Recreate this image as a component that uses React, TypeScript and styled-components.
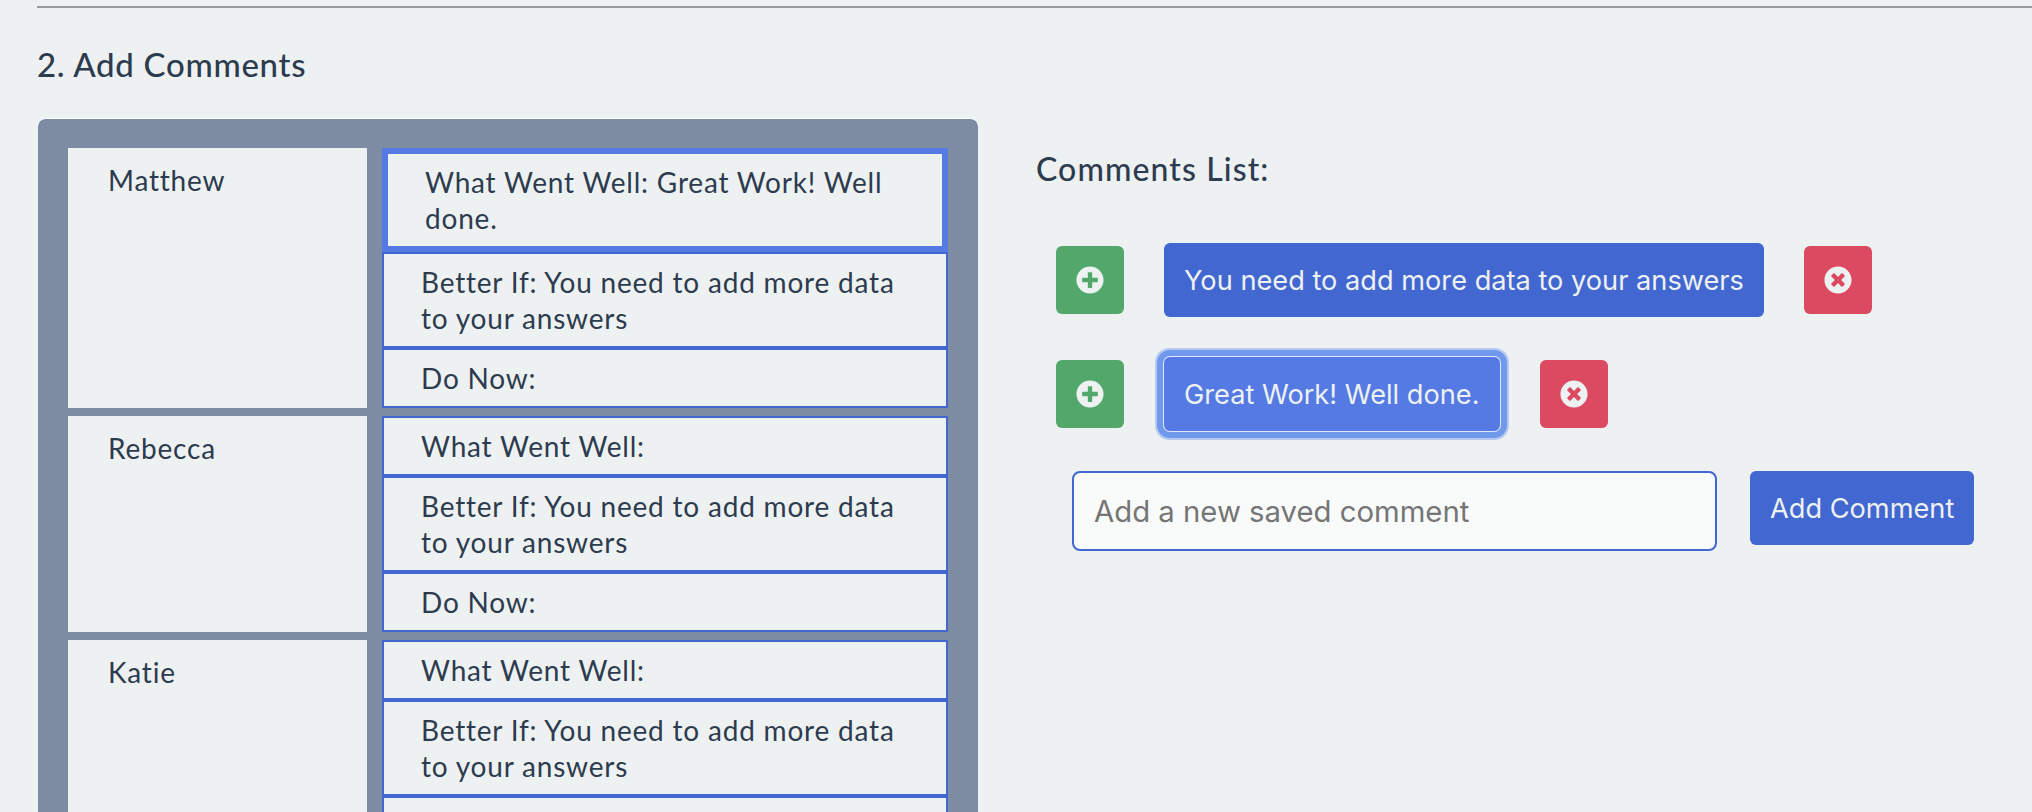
import styled, { createGlobalStyle } from 'styled-components'
import { FaPlusCircle, FaTimesCircle } from 'react-icons/fa'

const students = [
  { name: 'Matthew', well: 'Great Work! Well done.', selected: true },
  { name: 'Rebecca', well: '' },
  { name: 'Katie', well: '' },
]

const savedComments = [
  { text: 'You need to add more data to your answers' },
  { text: 'Great Work! Well done.', focused: true },
]

const App = () => (
  <Page>
    <GlobalStyle />
    <Rule />
    <SectionTitle>2. Add Comments</SectionTitle>
    <Columns>
      <StudentPanel>
        {students.map((student) => (
          <StudentRow key={student.name}>
            <NameCell>{student.name}</NameCell>
            <FeedbackStack>
              <FeedbackCell $selected={student.selected}>What Went Well:{student.well && ` ${student.well}`}</FeedbackCell>
              <FeedbackCell>Better If: You need to add more data to your answers</FeedbackCell>
              <FeedbackCell>Do Now:</FeedbackCell>
            </FeedbackStack>
          </StudentRow>
        ))}
      </StudentPanel>
      <CommentsColumn>
        <ListTitle>Comments List:</ListTitle>
        {savedComments.map((comment) => (
          <CommentRow key={comment.text}>
            <IconButton $color="#52a86b">
              <FaPlusCircle size={28} />
            </IconButton>
            <CommentButton $focused={comment.focused}>{comment.text}</CommentButton>
            <IconButton $color="#db4a60">
              <FaTimesCircle size={28} />
            </IconButton>
          </CommentRow>
        ))}
        <AddRow>
          <CommentInput placeholder="Add a new saved comment" />
          <AddButton>Add Comment</AddButton>
        </AddRow>
      </CommentsColumn>
    </Columns>
  </Page>
)

export default App

const GlobalStyle = createGlobalStyle`
  html, body {
    margin: 0;
    height: 812px;
    overflow: hidden;
    background: #edf1f2;
  }
`

const Page = styled.div`
  padding: 6px 0 0 37px;
  color: #2d3b4f;
  font-family: 'Lato', sans-serif;
`

const Rule = styled.hr`
  margin: 0;
  border: 0;
  border-top: 2px solid #999;
`

const SectionTitle = styled.h2`
  margin: 38px 0 36px;
  font-size: 33px;
  line-height: 36px;
  font-weight: 500;
  letter-spacing: 0.7px;
`

const Columns = styled.div`
  display: flex;
  align-items: flex-start;
  gap: 58px;
  margin-left: 1px;
`

const StudentPanel = styled.div`
  box-sizing: border-box;
  width: 940px;
  padding: 29px 30px 30px;
  display: flex;
  flex-direction: column;
  gap: 8px;
  flex-shrink: 0;
  background: #7d8ca3;
  border-top: 1px solid #fff;
  border-radius: 8px;
`

const StudentRow = styled.div`
  display: flex;
  gap: 15px;
`

const NameCell = styled.div`
  width: 299px;
  box-sizing: border-box;
  padding: 14px 40px;
  background: #edf1f2;
  font-size: 28px;
  line-height: 36px;
  letter-spacing: 0.8px;
`

const FeedbackStack = styled.div`
  width: 566px;
  display: flex;
  flex-direction: column;
`

const FeedbackCell = styled.div<{ $selected?: boolean }>`
  padding: 10px 37px;
  border: ${(p) => (p.$selected ? '6px solid #557ae3' : '2px solid #4267d0')};
  background: #edf1f2;
  font-size: 28px;
  line-height: 36px;
  letter-spacing: 0.8px;
`

const CommentsColumn = styled.div`
  display: flex;
  flex-direction: column;
  align-items: flex-start;
`

const ListTitle = styled.h3`
  margin: 33px 0 56px;
  font-size: 32px;
  line-height: 36px;
  font-weight: 500;
  letter-spacing: 1.1px;
`

const CommentRow = styled.div`
  display: flex;
  align-items: center;
  gap: 40px;
  margin: 0 0 40px 20px;
`

const IconButton = styled.button<{ $color: string }>`
  width: 68px;
  height: 68px;
  display: flex;
  align-items: center;
  justify-content: center;
  padding: 0;
  border: 0;
  border-radius: 6px;
  background: ${(p) => p.$color};
  color: #edf1f2;
`

const CommentButton = styled.button<{ $focused?: boolean }>`
  height: 74px;
  padding: 0 20px;
  border: 0;
  border-radius: 6px;
  background: ${(p) => (p.$focused ? '#557ae3' : '#4267d0')};
  color: #edf1f2;
  font-family: 'Inter', sans-serif;
  font-size: 27.2px;
  white-space: nowrap;
  box-shadow: ${(p) => (p.$focused ? '0 0 0 1px #dfe7f8, 0 0 0 7px #7099ee, 0 0 0 9px #b5c9f2' : 'none')};
`

const AddRow = styled.div`
  display: flex;
  align-items: flex-start;
  gap: 33px;
  margin-left: 36px;
`

const CommentInput = styled.input`
  box-sizing: border-box;
  width: 645px;
  height: 80px;
  padding: 0 20px;
  border: 2px solid #4267d0;
  border-radius: 8px;
  background: #f9fbfa;
  font-family: 'Inter', sans-serif;
  font-size: 29.3px;

  &::placeholder {
    color: #757575;
    opacity: 1;
  }
`

const AddButton = styled.button`
  height: 74px;
  padding: 0 20px;
  border: 0;
  border-radius: 6px;
  background: #4267d0;
  color: #edf1f2;
  font-family: 'Inter', sans-serif;
  font-size: 27.2px;
`
